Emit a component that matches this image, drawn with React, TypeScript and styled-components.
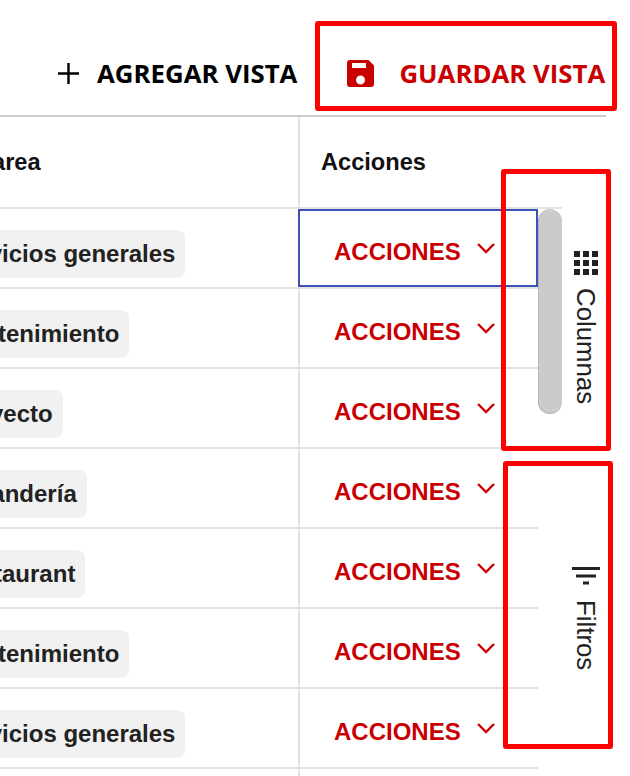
import React, { FC } from "react";
import styled, { createGlobalStyle } from "styled-components";

const GlobalStyle = createGlobalStyle`
  html, body {
    margin: 0;
    padding: 0;
    background: #fff;
  }
  body {
    width: 630px;
    height: 776px;
    overflow: hidden;
    font-family: "Liberation Sans", Arial, sans-serif;
  }
`;

const Page = styled.div`
  position: relative;
  width: 630px;
  height: 776px;
  overflow: hidden;
`;

const Toolbar = styled.div`
  width: 606px;
  height: 115px;
  display: flex;
  align-items: flex-start;
  border-bottom: 2px solid #cdcdcd;
`;

const ToolbarButton = styled.div<{ $color: string; $left: number; $gap: number }>`
  margin-left: ${p => p.$left}px;
  margin-top: 55px;
  height: 36px;
  display: flex;
  align-items: center;
  gap: ${p => p.$gap}px;
  color: ${p => p.$color};
  font-family: "Open Sans", sans-serif;
  font-weight: 700;
  font-size: 25.8px;
  white-space: nowrap;
`;

const Main = styled.div`
  display: flex;
`;

const TableArea = styled.div`
  width: 562px;
  flex: none;
`;

const HeaderRow = styled.div`
  height: 90px;
  display: flex;
  border-bottom: 2px solid #e2e2e2;
`;

const HeaderCell = styled.div<{ $pad: number }>`
  flex: none;
  white-space: nowrap;
  padding-top: 33px;
  padding-left: ${p => p.$pad}px;
  font-size: 23.6px;
  line-height: 24px;
  font-weight: 700;
  color: #111;
`;

const AreaHeader = styled(HeaderCell)`
  width: 298px;
  box-sizing: border-box;
  overflow: hidden;
  display: flex;
  justify-content: flex-start;
`;

const AreaHeaderText = styled.span`
  margin-left: -98px;
`;

const HeaderDivider = styled.div`
  width: 2px;
  height: 90px;
  background: #e2e2e2;
  flex: none;
`;

const BodyWrap = styled.div`
  position: relative;
  width: 538px;
`;

const Row = styled.div`
  display: flex;
  height: 78px;
  border-bottom: 2px solid #e2e2e2;
`;

const AreaCell = styled.div`
  width: 298px;
  flex: none;
  overflow: hidden;
  display: flex;
  align-items: center;
`;

const Pill = styled.span`
  margin-left: -60px;
  margin-top: 12px;
  height: 48px;
  padding: 0 10px;
  display: inline-flex;
  align-items: center;
  background: #f1f1f1;
  border-radius: 8px;
  font-size: 24px;
  font-weight: 700;
  color: #222;
  white-space: nowrap;
`;

const ActionCell = styled.div<{ $focused?: boolean }>`
  width: 240px;
  flex: none;
  box-sizing: border-box;
  display: flex;
  align-items: center;
  padding-left: 34px;
  padding-top: 8px;
  border-left: 2px solid #e2e2e2;
  ${p => p.$focused && `border: 2px solid #3f51b5;`}
`;

const ActionLabel = styled.span`
  color: #c80000;
  font-size: 24px;
  font-weight: 700;
  white-space: nowrap;
`;

const Chevron = styled.svg`
  margin-left: 15px;
  margin-top: -9px;
  width: 20px;
  height: 12px;
  flex: none;
`;

const Scrollbar = styled.div`
  position: absolute;
  left: 538px;
  top: 0;
  width: 24px;
  height: 205px;
  box-sizing: border-box;
  border-radius: 12px;
  background: #cbcbcb;
  border-left: 1px solid #b5b5b5;
  border-bottom: 1px solid #b5b5b5;
`;

const Rail = styled.div`
  flex: 1;
  display: flex;
  flex-direction: column;
  align-items: flex-start;
  padding-left: 10px;
`;

const RailButton = styled.div<{ $top: number; $gap: number }>`
  margin-top: ${p => p.$top}px;
  width: 28px;
  display: flex;
  flex-direction: column;
  align-items: center;
  gap: ${p => p.$gap}px;
  color: #222;
`;

const RailLabel = styled.span`
  writing-mode: vertical-rl;
  font-size: 25.8px;
  line-height: 28px;
  white-space: nowrap;
`;

const GridIcon = styled.div`
  width: 24px;
  height: 24px;
  display: grid;
  grid-template-columns: repeat(3, 6px);
  grid-auto-rows: 6px;
  gap: 3px;
`;

const GridDot = styled.span`
  background: #222;
`;

const Callout = styled.div<{ $x: number; $y: number; $w: number; $h: number }>`
  position: absolute;
  left: ${p => p.$x}px;
  top: ${p => p.$y}px;
  width: ${p => p.$w}px;
  height: ${p => p.$h}px;
  box-sizing: border-box;
  border: 5.5px solid #fe0000;
  border-radius: 3px;
  pointer-events: none;
`;

const rows = [
  "Servicios generales",
  "Mantenimiento",
  "Proyecto",
  "Lavandería",
  "Restaurant",
  "Mantenimiento",
  "Servicios generales",
  "Proyecto",
];

const ChevronIcon: FC = () => (
  <Chevron viewBox="0 0 20 12" fill="none">
    <path d="M2 2l8 8 8-8" stroke="#c80000" strokeWidth="2.4" />
  </Chevron>
);

export default function App() {
  return (
    <Page>
      <GlobalStyle />
      <Toolbar>
        <ToolbarButton $color="#000" $left={58} $gap={18}>
          <svg width="21" height="21" viewBox="0 0 21 21">
            <path d="M10.500 0v21M0 10.500h21" stroke="#000" strokeWidth="2.4" />
          </svg>
          AGREGAR VISTA
        </ToolbarButton>
        <ToolbarButton $color="#c80000" $left={50} $gap={25}>
          <svg width="27" height="27" viewBox="0 0 27 27">
            <path
              d="M3 0h18.500l5.500 5.500v18.500a3 3 0 0 1-3 3H3a3 3 0 0 1-3-3V3a3 3 0 0 1 3-3zM5 3v5h14V3zM13.500 15.500a4.500 4.500 0 1 0 0 9 4.500 4.500 0 0 0 0-9z"
              fill="#c80000"
              fillRule="evenodd"
            />
          </svg>
          GUARDAR VISTA
        </ToolbarButton>
      </Toolbar>
      <Main>
        <TableArea>
          <HeaderRow>
            <AreaHeader $pad={0}>
              <AreaHeaderText>Tipo de area</AreaHeaderText>
            </AreaHeader>
            <HeaderDivider />
            <HeaderCell $pad={21}>Acciones</HeaderCell>
          </HeaderRow>
          <BodyWrap>
            {rows.map((name, i) => (
              <Row key={i}>
                <AreaCell>
                  <Pill>{name}</Pill>
                </AreaCell>
                <ActionCell $focused={i === 0}>
                  <ActionLabel>ACCIONES</ActionLabel>
                  <ChevronIcon />
                </ActionCell>
              </Row>
            ))}
            <Scrollbar />
          </BodyWrap>
        </TableArea>
        <Rail>
          <RailButton $top={134} $gap={13}>
            <GridIcon>
              {Array.from({ length: 9 }).map((_, i) => (
                <GridDot key={i} />
              ))}
            </GridIcon>
            <RailLabel>Columnas</RailLabel>
          </RailButton>
          <RailButton $top={163} $gap={15}>
            <svg width="28" height="18" viewBox="0 0 28 18">
              <path d="M0 1.500h28M4 9h20M11 16h6" stroke="#222" strokeWidth="3" />
            </svg>
            <RailLabel>Filtros</RailLabel>
          </RailButton>
        </Rail>
      </Main>
      <Callout $x={315} $y={21} $w={302} $h={90} />
      <Callout $x={501} $y={169} $w={110} $h={282} />
      <Callout $x={503} $y={461} $w={110} $h={288} />
    </Page>
  );
}
